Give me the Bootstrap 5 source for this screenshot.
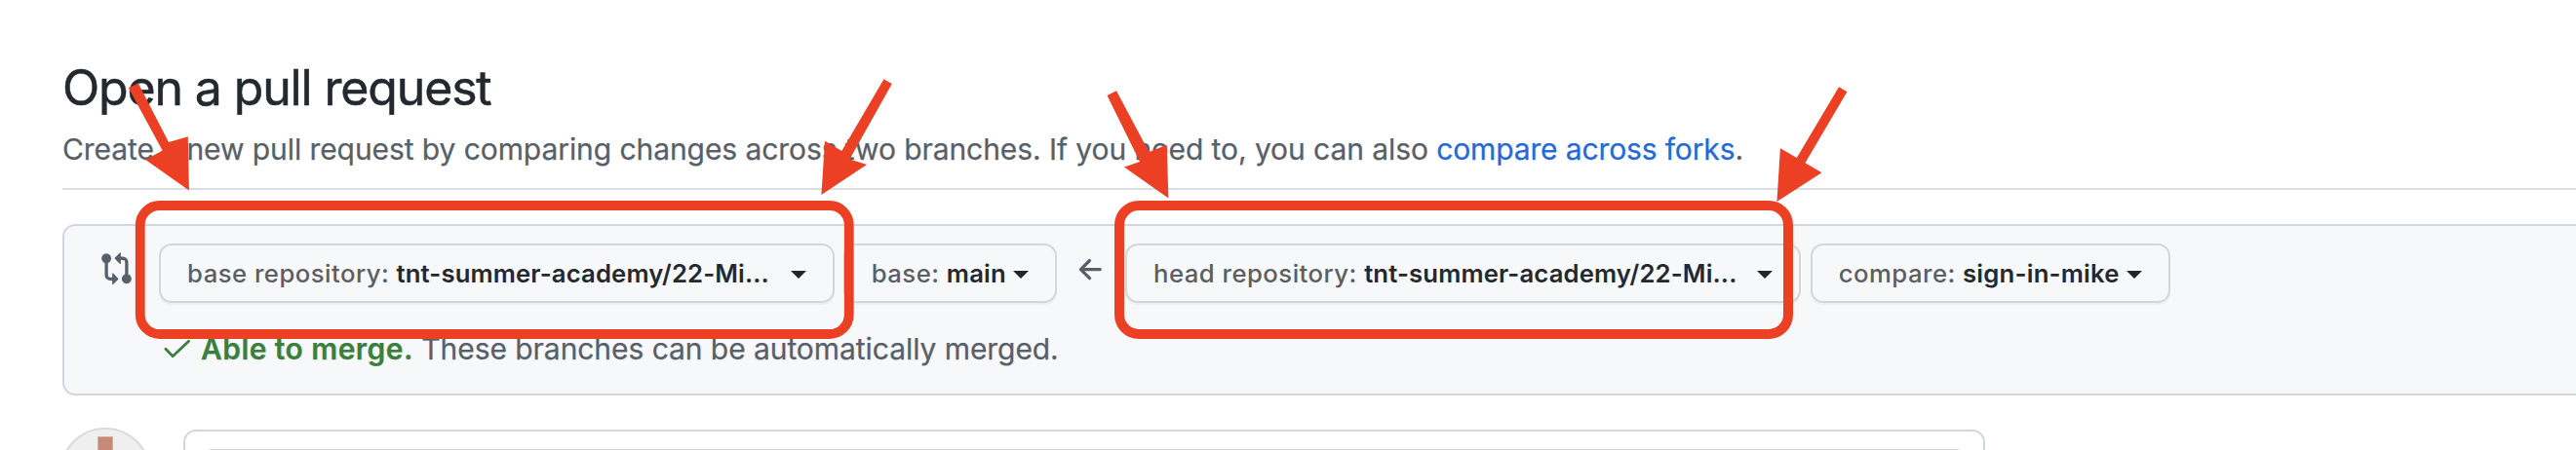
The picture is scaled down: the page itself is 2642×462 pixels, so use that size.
<!DOCTYPE html>
<html lang="en">
<head>
<meta charset="utf-8">
<meta name="viewport" content="width=device-width, initial-scale=1">
<title>Open a pull request</title>
<link href="https://cdn.jsdelivr.net/npm/bootstrap@5.3.0/dist/css/bootstrap.min.css" rel="stylesheet">
<style>
  body { font-family: Inter, "Liberation Sans", sans-serif; font-size: 30px; color: #24292f; background: #fff; height: 462px; overflow: hidden; }
  .page { padding-left: 64px; height: 462px; overflow: hidden; }
  .page-head { height: 195px; padding-top: 52px; border-bottom: 2px solid #d8dee4; }
  .page-head h1 { font-size: 50px; line-height: 76px; font-weight: 400; letter-spacing: -1.15px; -webkit-text-stroke: .5px; }
  .page-head p { line-height: 45px; letter-spacing: -.075px; color: #57606a; padding-top: 3px; white-space: nowrap; -webkit-text-stroke: .25px; }
  .page-head a { color: #2569d6; letter-spacing: -.13px; }
  .range-editor { height: 176px; margin-top: 35px; padding: 18px 0 0 36px; background: #f6f8fa; border: 2px solid #d0d7de; border-right: 0; border-radius: 13px 0 0 13px; color: #57606a; }
  .range-editor svg { flex: none; }
  .compare-icon { width: 35px; height: 35.5px; margin: 8px 26.3px 0 0; }
  .arrow-icon { width: 34.3px; height: 34.3px; margin: 9.5px 17.9px 0 18px; }
  .btn-ref { --bs-btn-padding-x: 0; --bs-btn-padding-y: 0; --bs-btn-bg: #f6f8fa; --bs-btn-border-color: #d4d7d9; --bs-btn-border-width: 2px; --bs-btn-border-radius: 13px;
    --bs-btn-font-size: 25.7px; --bs-btn-line-height: 57px; height: 61px; padding: 0 27px 0 26.8px; box-shadow: 0 2px 0 rgba(27,31,36,.04); flex: none; }
  .btn-ref::after { border-width: 8.5px 8.5px 0; margin: 2px 0 0; vertical-align: 0; }
  .btn-ref .ref-kind { color: #5b5f64; font-weight: 500; letter-spacing: .47px; }
  .btn-ref .ref-name { color: #24292f; font-weight: 600; letter-spacing: .13px; }
  .btn-ref .ref-branch { letter-spacing: .22px; }
  .ref-base-repo { width: 692.6px; } .ref-base { width: 219.2px; margin-left: 9px; }
  .ref-head-repo { width: 692.8px; } .ref-head { width: 369.3px; margin-left: 9.9px; }
  .merge-line { line-height: 44px; margin-top: 25px; padding-left: 64.5px; letter-spacing: -.06px; }
  .merge-line div { -webkit-text-stroke: .25px; }
  .merge-line svg { width: 30px; height: 24px; margin: 9px 9.5px 0 0; }
  .merge-line strong { color: #3a7f3c; font-weight: 600; letter-spacing: .43px; }
  .avatar-wrap { width: 94px; height: 94px; margin: 32.5px 0 0 -3px; background: #efefef; border: 2px solid #dadada; padding-top: 7px; }
  .avatar-bar { width: 16px; height: 40px; background: #c58b77; border: 1px solid #cfb0a2; }
  .comment-box { width: 1848.3px; height: 120px; margin: 35px 0 0 33px; padding: 18px 15px; border: 2px solid #d0d7de; border-radius: 13px; }
  .comment-input { height: 90px; border: 2px solid #d0d7de; border-radius: 13px; }
  .callouts { left: 0; top: 0; pointer-events: none; }
</style>
</head>
<body class="position-relative">
<main class="page">
  <header class="page-head">
    <h1 class="mb-0">Open a pull request</h1>
    <p class="mb-0">Create a new pull request by comparing changes across two branches. If you need to, you can also <a href="#" class="text-decoration-none">compare across forks</a>.</p>
  </header>

  <section class="range-editor">
    <div class="d-flex align-items-start">
      <svg class="compare-icon" viewBox="0 0 16 16" preserveAspectRatio="none" fill="currentColor"><path d="M9.573.677L7.177 3.073a.25.25 0 000 .354l2.396 2.396A.25.25 0 0010 5.646V4h1a1 1 0 011 1v5.628a2.251 2.251 0 101.5 0V5A2.5 2.5 0 0011 2.5h-1V.854a.25.25 0 00-.427-.177zM6 12v-1.646a.25.25 0 01.427-.177l2.396 2.396a.25.25 0 010 .354l-2.396 2.396A.25.25 0 016 15.146V13.5H5A2.5 2.5 0 012.5 11V5.372a2.25 2.25 0 111.5 0V11a1 1 0 001 1h1zm6.75 0a.75.75 0 100 1.5.75.75 0 000-1.5zM4 3.25a.75.75 0 11-1.5 0 .75.75 0 011.5 0z"/></svg>
      <button type="button" class="btn btn-ref ref-base-repo dropdown-toggle d-flex align-items-center justify-content-between"><span><span class="ref-kind">base repository: </span><span class="ref-name">tnt-summer-academy/22-Mi...</span></span></button>
      <button type="button" class="btn btn-ref ref-base dropdown-toggle d-flex align-items-center justify-content-between"><span><span class="ref-kind">base: </span><span class="ref-name ref-branch">main</span></span></button>
      <svg class="arrow-icon" viewBox="0 0 16 16" fill="currentColor"><path d="M7.78 12.53a.75.75 0 01-1.06 0L2.47 8.28a.75.75 0 010-1.06l4.25-4.25a.75.75 0 011.06 1.06L4.81 7h7.44a.75.75 0 010 1.5H4.81l2.97 2.97a.75.75 0 010 1.06z"/></svg>
      <button type="button" class="btn btn-ref ref-head-repo dropdown-toggle d-flex align-items-center justify-content-between"><span><span class="ref-kind">head repository: </span><span class="ref-name">tnt-summer-academy/22-Mi...</span></span></button>
      <button type="button" class="btn btn-ref ref-head dropdown-toggle d-flex align-items-center justify-content-between"><span><span class="ref-kind">compare: </span><span class="ref-name ref-branch">sign-in-mike</span></span></button>
    </div>
    <div class="merge-line d-flex align-items-start">
      <svg viewBox="0 0 30 24" fill="none" stroke="#3a7f3c" stroke-width="2.8" stroke-linecap="round" stroke-linejoin="round"><path d="M2.9 13.3L10.2 20.7L26.6 5.2"/></svg>
      <div><strong>Able to merge.</strong> These branches can be automatically merged.</div>
    </div>
  </section>

  <section class="d-flex align-items-start">
    <div class="avatar-wrap rounded-circle d-flex justify-content-center flex-shrink-0"><div class="avatar-bar"></div></div>
    <div class="comment-box"><div class="comment-input"></div></div>
  </section>
</main>

<!-- callouts drawn over the page -->
<svg class="callouts position-absolute" width="2642" height="462" viewBox="0 0 2642 462" fill="#ec4025">
  <g fill="none" stroke="#ec4025">
    <rect x="143.75" y="211" width="727" height="132" rx="20" stroke-width="9.8"/>
    <rect x="1148" y="211" width="686" height="132" rx="20" stroke-width="10"/>
  </g>
  <path d="M131.8 90.3L141.8 85.5L173 146L192.8 140.3L193.9 195.5L149.3 164L166.6 154.5Z"/>
  <path d="M906.5 81.3L914.8 86L871.4 163.5L889 169L842.4 200L846 144.7L863.3 155Z"/>
  <path d="M1135.5 98L1145 93.3L1178.4 156L1196.7 148.7L1198.4 203.5L1153 171.5L1169 166Z"/>
  <path d="M1886 89.3L1894.4 94.3L1851.4 167.3L1868.4 177.3L1822.4 207L1825.9 152.3L1842.8 162Z"/>
</svg>
<script src="https://cdn.jsdelivr.net/npm/bootstrap@5.3.0/dist/js/bootstrap.bundle.min.js"></script>
</body>
</html>
